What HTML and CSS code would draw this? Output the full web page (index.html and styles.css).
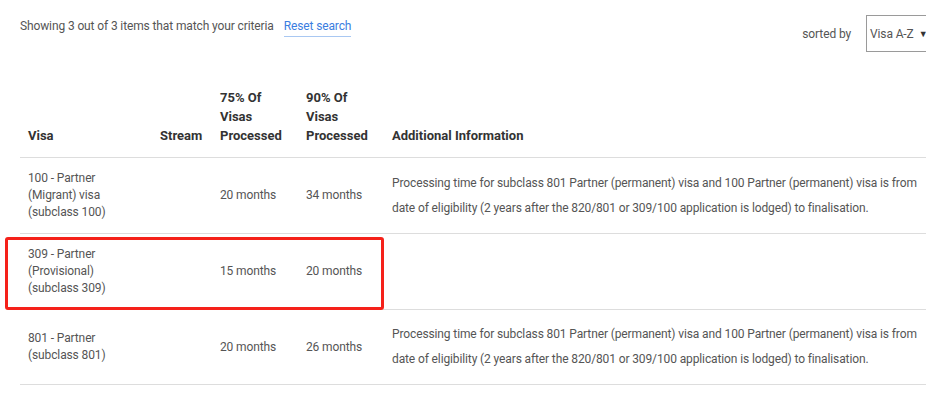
FILE: index.html
```html
<!DOCTYPE html>
<html lang="en">
<head>
<meta charset="utf-8">
<title>Processing times</title>
<link rel="stylesheet" href="styles.css">
</head>
<body>
<div class="page">
  <div class="topbar">
    <div class="summary">
      <span>Showing 3 out of 3 items that match your criteria</span>
      <a class="reset" href="#">Reset search</a>
    </div>
    <div class="sort">
      <span class="sort-label">sorted by</span>
      <div class="select">
        <span>Visa A-Z</span>
        <span class="arrow">&#9660;</span>
      </div>
    </div>
  </div>

  <table class="results">
    <colgroup>
      <col class="c-visa">
      <col class="c-stream">
      <col class="c-75">
      <col class="c-90">
      <col class="c-info">
    </colgroup>
    <thead>
      <tr>
        <th>Visa</th>
        <th>Stream</th>
        <th>75% Of<br>Visas<br>Processed</th>
        <th>90% Of<br>Visas<br>Processed</th>
        <th>Additional Information</th>
      </tr>
    </thead>
    <tbody>
      <tr>
        <td class="visa">100 - Partner<br>(Migrant) visa<br>(subclass 100)</td>
        <td></td>
        <td>20 months</td>
        <td>34 months</td>
        <td class="info">Processing time for subclass 801 Partner (permanent) visa and 100 Partner (permanent) visa is from date of eligibility (2 years after the 820/801 or 309/100 application is lodged) to finalisation.</td>
      </tr>
      <tr>
        <td class="visa marked">309 - Partner<br>(Provisional)<br>(subclass 309)<div class="highlight"></div></td>
        <td></td>
        <td>15 months</td>
        <td>20 months</td>
        <td class="info"></td>
      </tr>
      <tr>
        <td class="visa">801 - Partner<br>(subclass 801)</td>
        <td></td>
        <td>20 months</td>
        <td>26 months</td>
        <td class="info">Processing time for subclass 801 Partner (permanent) visa and 100 Partner (permanent) visa is from date of eligibility (2 years after the 820/801 or 309/100 application is lodged) to finalisation.</td>
      </tr>
    </tbody>
  </table>
</div>
</body>
</html>
```

FILE: styles.css
```css
html, body {
  margin: 0;
  padding: 0;
  background: #ffffff;
  overflow: hidden;
}

body {
  font-family: Roboto, "Liberation Sans", Arial, sans-serif;
  font-size: 12px;
  letter-spacing: -0.12px;
  color: #555555;
}

.page {
  width: 940px;
}

.topbar {
  display: flex;
  justify-content: space-between;
  align-items: flex-start;
  padding: 15px 0 0 20px;
}

.summary {
  display: flex;
  align-items: baseline;
  gap: 10px;
  padding-top: 3px;
  line-height: 16px;
}

.reset {
  color: #3b7de0;
  text-decoration: none;
  border-bottom: 1px solid #a9c8f2;
  padding-bottom: 2px;
}

.sort {
  display: flex;
  align-items: center;
  gap: 15px;
}

.sort-label {
  color: #555555;
}

.select {
  display: flex;
  align-items: center;
  gap: 5px;
  height: 37px;
  box-sizing: border-box;
  width: 74px;
  padding: 0 3px;
  border: 1px solid #9a9a9a;
  color: #555555;
}

.arrow {
  font-size: 9px;
  color: #333333;
}

.results {
  margin: 36px 0 0 20px;
  border-collapse: collapse;
  table-layout: fixed;
  width: 910px;
}

.c-visa { width: 132px; }
.c-stream { width: 60px; }
.c-75 { width: 86px; }
.c-90 { width: 86px; }
.c-info { width: auto; }

.results th {
  text-align: left;
  vertical-align: bottom;
  font-size: 13px;
  font-weight: 700;
  letter-spacing: 0;
  color: #333333;
  line-height: 19px;
  padding: 0 8px 12px 8px;
  border-bottom: 1px solid #dddddd;
}

.results td {
  vertical-align: middle;
  padding: 12px 8px;
  line-height: 17px;
  border-bottom: 1px solid #dddddd;
}

.results td.info {
  line-height: 25px;
}

.marked {
  position: relative;
}

.highlight {
  position: absolute;
  left: -15px;
  top: 3px;
  width: 379px;
  height: 73px;
  box-sizing: border-box;
  border: 3px solid #f5211a;
  border-radius: 3px;
}
```
